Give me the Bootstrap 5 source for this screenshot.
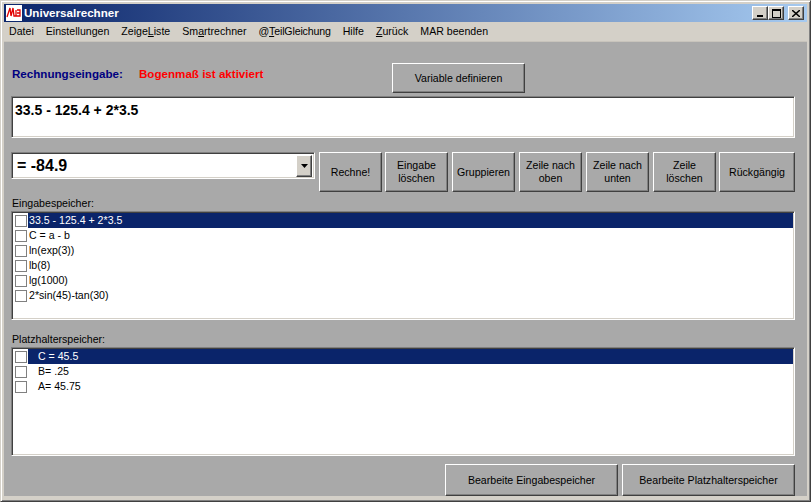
<!doctype html>
<html lang="de"><head><meta charset="utf-8">
<link rel="stylesheet" href="https://cdn.jsdelivr.net/npm/bootstrap@5.3.0/dist/css/bootstrap.min.css">
<style>
html,body{height:100%;margin:0;background:#d4d0c8}
body{font:10.6px/13px "Liberation Sans",sans-serif;color:#000}
.win{height:502px;width:811px;background:#d4d0c8;padding:3px;border:1px solid;border-color:#d4d0c8 #404040 #404040 #d4d0c8;box-shadow:inset 1px 1px 0 #fff,inset -1px -1px 0 #808080;overflow:hidden}
.win>*{flex:none}
.ttl{height:18px;background:linear-gradient(90deg,#0a246a,#a6caf0);color:#fff;font:700 11.6px/18px "Liberation Sans",sans-serif;padding:0 3px 0 2px}
.ico{margin-right:2px;flex:none}
.tb{width:16px;height:14px;background:#d4d0c8;border:1px solid;border-color:#fff #404040 #404040 #fff;box-shadow:inset -1px -1px 0 #808080;display:flex;align-items:center;justify-content:center;padding:0}
.mnu{height:19px;background:#d4d0c8;gap:12px;line-height:19px;padding-left:5px}
.tight{letter-spacing:-.15px}
.cli{height:455px;background:#a9a9a9;padding:0 12px 0 7px;border-top:1px solid #c8c4bc}
.cli>*{flex:none}
.tophd{height:54px}
.lbl1{font:700 11.6px/15px "Liberation Sans",sans-serif;color:#000080;margin:24px 0 0 1px;width:127px}
.lbl2{font:700 11.6px/15px "Liberation Sans",sans-serif;color:#f00;margin-top:24px;width:253px}
.wb{background:#a9a9a9;border:1px solid;border-color:#fff #404040 #404040 #fff;box-shadow:inset -1px -1px 0 #808080;color:#000;font:inherit;padding:0;text-align:center}
.vbtn{width:133px;height:30px;margin-top:21px}
.ein{height:42px;background:#fff;border:1px solid;border-color:#808080 #fff #fff #808080;box-shadow:inset 1px 1px 0 #404040,inset -1px -1px 0 #d4d0c8;font:700 14px/18px "Liberation Sans",sans-serif;padding:4px 3px}
.act{margin-top:14px;height:40px;gap:4px}
.cmb{width:304px;height:27px;background:#fff;border:1px solid;border-color:#808080 #fff #fff #808080;box-shadow:inset 1px 1px 0 #404040,inset -1px -1px 0 #d4d0c8;font:700 16px/21px "Liberation Sans",sans-serif;padding:2px;padding-left:5px}
.arw{width:16px;height:22px;background:#d4d0c8;border:1px solid;border-color:#fff #404040 #404040 #fff;box-shadow:inset -1px -1px 0 #808080;display:flex;align-items:center;justify-content:center}
.b63{width:63px;height:40px}.b76{width:76px;height:40px}
.snug{margin-left:-1px}
.cap1{margin:5px 0 0 1px;height:14px}.cap2{margin:13px 0 0 1px;height:14px}
.lst{height:109px;background:#fff;border:1px solid;border-color:#808080 #fff #fff #808080;box-shadow:inset 1px 1px 0 #404040,inset -1px -1px 0 #d4d0c8;padding:1px 1px 1px 2px}
.ln{height:15px;line-height:15px;white-space:nowrap}
.cb{width:10px;height:10px;border:1px solid #808080;background:#fff;margin:2px 1px 1px 1px;flex:none;box-sizing:content-box}
.tx{padding-left:1px;flex:1}
.sel .tx{background:#0a246a;color:#fff}
.ind{padding-left:10px}
.ftr{margin-top:8px;gap:4px}
.bb{width:173px;height:32px}
u{text-underline-offset:1px}
</style></head><body>
<div class="win d-flex flex-column">
 <div class="ttl d-flex align-items-center">
  <svg width="16" height="16" viewBox="0 0 16 16" class="ico"><rect width="16" height="16" fill="#fff"/><path d="M1 12 4 3l1 8M5 11 7 3l1 8h4M10 5v6M11 5h3v3h-3m3 0v3h-3" fill="none" stroke="#e00000" stroke-width="1.3"/></svg>
  <span class="flex-grow-1">Universalrechner</span>
  <button class="tb" aria-label="min"><svg width="8" height="8"><rect x="1" y="6" width="6" height="2"/></svg></button>
  <button class="tb" aria-label="max"><svg width="9" height="9"><path d="M0 0h9v9H0zM1 2v6h7V2z" fill-rule="evenodd"/></svg></button>
  <button class="tb ms-1" aria-label="close"><svg width="8" height="7"><path d="M0 0 8 7M8 0 0 7" stroke="#000" stroke-width="1.5"/></svg></button>
 </div>
 <div class="mnu d-flex">
  <span>Datei</span><span>Einstellungen</span><span>Zeige<u>L</u>iste</span><span>Sm<u>a</u>rtrechner</span><span class="tight">@<u>T</u>eilGleichung</span><span>Hilfe</span><span><u>Z</u>urück</span><span>MAR beenden</span>
 </div>
 <div class="cli d-flex flex-column">
  <div class="tophd d-flex">
   <div class="lbl1">Rechnungseingabe:</div><div class="lbl2">Bogenmaß ist aktiviert</div>
   <button class="wb vbtn">Variable definieren</button>
  </div>
  <div class="ein">33.5 - 125.4 + 2*3.5</div>
  <div class="act d-flex">
   <div class="cmb d-flex justify-content-between"><span>= -84.9</span><span class="arw"><svg width="7" height="4"><path d="M0 0h7L3.5 4z"/></svg></span></div>
   <button class="wb b63">Rechne!</button><button class="wb b63 snug">Eingabe<br>löschen</button><button class="wb b63">Gruppieren</button><button class="wb b63">Zeile nach<br>oben</button><button class="wb b63">Zeile nach<br>unten</button><button class="wb b63">Zeile<br>löschen</button><button class="wb b76 snug">Rückgängig</button>
  </div>
  <div class="cap1">Eingabespeicher:</div>
  <div class="lst">
   <div class="ln d-flex sel"><span class="cb"></span><span class="tx">33.5 - 125.4 + 2*3.5</span></div>
   <div class="ln d-flex"><span class="cb"></span><span class="tx">C = a - b</span></div>
   <div class="ln d-flex"><span class="cb"></span><span class="tx">ln(exp(3))</span></div>
   <div class="ln d-flex"><span class="cb"></span><span class="tx">lb(8)</span></div>
   <div class="ln d-flex"><span class="cb"></span><span class="tx">lg(1000)</span></div>
   <div class="ln d-flex"><span class="cb"></span><span class="tx">2*sin(45)-tan(30)</span></div>
  </div>
  <div class="cap2">Platzhalterspeicher:</div>
  <div class="lst">
   <div class="ln d-flex sel"><span class="cb"></span><span class="tx ind">C = 45.5</span></div>
   <div class="ln d-flex"><span class="cb"></span><span class="tx ind">B= .25</span></div>
   <div class="ln d-flex"><span class="cb"></span><span class="tx ind">A= 45.75</span></div>
  </div>
  <div class="ftr d-flex justify-content-end"><button class="wb bb">Bearbeite Eingabespeicher</button><button class="wb bb">Bearbeite Platzhalterspeicher</button></div>
 </div>
</div>
<script src="https://cdn.jsdelivr.net/npm/bootstrap@5.3.0/dist/js/bootstrap.bundle.min.js"></script>
</body></html>
